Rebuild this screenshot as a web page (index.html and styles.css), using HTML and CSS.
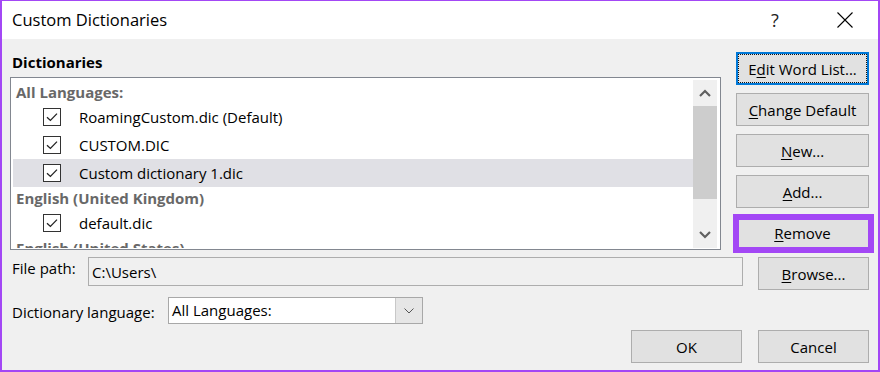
FILE: index.html
```html
<!DOCTYPE html>
<html lang="en">
<head>
<meta charset="utf-8">
<title>Custom Dictionaries</title>
<link rel="stylesheet" href="styles.css">
</head>
<body>
<div class="window">
  <div class="titlebar">
    <span class="title">Custom Dictionaries</span>
    <span class="help">?</span>
    <svg class="close" width="16" height="16" viewBox="0 0 16 16"><path d="M0.5 0.5 L15.5 15.5 M15.5 0.5 L0.5 15.5" stroke="#000" stroke-width="1.1" fill="none"/></svg>
  </div>
  <div class="content">
    <div class="top">
      <div class="dicts">
        <div class="section-label">Dictionaries</div>
        <div class="listbox">
          <div class="list">
            <div class="group">All Languages:</div>
            <div class="item"><span class="cb"><svg width="16" height="16" viewBox="0 0 16 16"><path d="M3 8.2 L6.4 11.4 L13 4.6" stroke="#222" stroke-width="1.3" fill="none"/></svg></span><span class="name">RoamingCustom.dic (Default)</span></div>
            <div class="item"><span class="cb"><svg width="16" height="16" viewBox="0 0 16 16"><path d="M3 8.2 L6.4 11.4 L13 4.6" stroke="#222" stroke-width="1.3" fill="none"/></svg></span><span class="name">CUSTOM.DIC</span></div>
            <div class="item selected"><span class="cb"><svg width="16" height="16" viewBox="0 0 16 16"><path d="M3 8.2 L6.4 11.4 L13 4.6" stroke="#222" stroke-width="1.3" fill="none"/></svg></span><span class="name">Custom dictionary 1.dic</span></div>
            <div class="group">English (United Kingdom)</div>
            <div class="item"><span class="cb"><svg width="16" height="16" viewBox="0 0 16 16"><path d="M3 8.2 L6.4 11.4 L13 4.6" stroke="#222" stroke-width="1.3" fill="none"/></svg></span><span class="name">default.dic</span></div>
            <div class="group">English (United States)</div>
          </div>
          <div class="scrollbar">
            <div class="arrow"><svg width="12" height="8" viewBox="0 0 12 8"><polyline points="1,7 6,2 11,7" stroke="#606060" stroke-width="2.2" fill="none"/></svg></div>
            <div class="track"><div class="thumb"></div></div>
            <div class="arrow"><svg width="12" height="8" viewBox="0 0 12 8"><polyline points="1,1 6,6 11,1" stroke="#606060" stroke-width="2.2" fill="none"/></svg></div>
          </div>
        </div>
      </div>
      <div class="actions">
        <div class="btn default">E<u>d</u>it Word List...</div>
        <div class="btn"><u>C</u>hange Default</div>
        <div class="btn"><u>N</u>ew...</div>
        <div class="btn"><u>A</u>dd...</div>
        <div class="btn marked"><u>R</u>emove</div>
      </div>
    </div>
    <div class="row path-row">
      <span class="label path-label">File path:</span>
      <div class="textbox">C:\Users\</div>
      <div class="btn wide"><u>B</u>rowse...</div>
    </div>
    <div class="row lang-row">
      <span class="label lang-label">Dictionary language:</span>
      <div class="select">
        <span class="select-value">All Languages:</span>
        <span class="drop"><svg width="10" height="6" viewBox="0 0 10 6"><polyline points="0.5,0.5 5,5 9.5,0.5" stroke="#555" stroke-width="1" fill="none"/></svg></span>
      </div>
    </div>
    <div class="row footer">
      <div class="btn wide">OK</div>
      <div class="btn wide">Cancel</div>
    </div>
  </div>
</div>
</body>
</html>
```

FILE: styles.css
```css
* { box-sizing: border-box; }
html, body { margin: 0; padding: 0; }
body {
  width: 880px;
  height: 372px;
  overflow: hidden;
  font-family: "Open Sans", "Noto Sans", sans-serif;
  font-size: 15px;
  color: #000;
}
.window {
  width: 880px;
  height: 372px;
  border: 2px solid #a347f5;
  border-top-width: 1px;
  background: #f0f0f0;
  display: flex;
  flex-direction: column;
}
.titlebar {
  height: 38px;
  flex: none;
  background: #fff;
  display: flex;
  align-items: center;
  padding-left: 10px;
}
.title {
  flex: 1;
  font-size: 16.5px;
  line-height: 20px;
}
.help {
  width: 20px;
  text-align: center;
  font-size: 18px;
  line-height: 20px;
  color: #222;
  margin-right: 52px;
}
.close {
  margin-right: 25px;
  flex: none;
}
.content {
  flex: 1;
  padding: 13px 9px 0 8px;
  display: flex;
  flex-direction: column;
}
.top {
  display: flex;
  gap: 15px;
  height: 198px;
  flex: none;
}
.dicts {
  width: 711px;
  display: flex;
  flex-direction: column;
}
.section-label {
  font-weight: 700;
  line-height: 20px;
  height: 20px;
  margin: 0 0 5px 2px;
}
.listbox {
  height: 173px;
  border: 1px solid #828790;
  background: #fff;
  display: flex;
  padding: 2px 2px 1px 2px;
}
.list {
  width: 680px;
  overflow: hidden;
  padding-top: 1px;
}
.group {
  height: 22px;
  line-height: 22px;
  padding-left: 3px;
  font-weight: 700;
  color: #686868;
  white-space: nowrap;
}
.item {
  height: 28px;
  display: flex;
  align-items: center;
  white-space: nowrap;
}
.item.selected { background: #e0e0e5; }
.cb {
  width: 18px;
  height: 18px;
  margin-left: 30px;
  margin-right: 18px;
  border: 1px solid #333;
  background: #fff;
  display: flex;
  align-items: center;
  justify-content: center;
}
.scrollbar {
  width: 24px;
  background: #f0f0f0;
  display: flex;
  flex-direction: column;
}
.arrow {
  height: 26px;
  display: flex;
  align-items: center;
  justify-content: center;
}
.track {
  flex: 1;
}
.thumb {
  height: 93px;
  background: #cdcdcd;
}
.actions {
  width: 133px;
  display: flex;
  flex-direction: column;
  gap: 8px;
}
.btn {
  height: 33px;
  flex: none;
  background: #e1e1e1;
  border: 1px solid #adadad;
  display: flex;
  align-items: center;
  justify-content: center;
  white-space: nowrap;
  position: relative;
}
.btn u { text-decoration-thickness: 1px; text-underline-offset: 2px; }
.btn.default {
  border: 2px solid #0078d7;
}
.btn.default::after {
  content: "";
  position: absolute;
  inset: 0;
  border: 1px dotted #111;
}
.btn.marked::after {
  content: "";
  position: absolute;
  top: -3px;
  left: -4px;
  right: -6px;
  bottom: -5px;
  border: 6px solid #a347f5;
}
.row {
  display: flex;
  flex: none;
}
.label {
  padding-left: 2px;
  white-space: nowrap;
}
.path-row {
  margin-top: 7px;
  height: 33px;
  align-items: flex-start;
}
.path-label {
  width: 78px;
  line-height: 22px;
}
.textbox {
  width: 655px;
  height: 29px;
  border: 1px solid #adadad;
  background: #f0f0f0;
  padding: 2px 0 0 3px;
  line-height: 24px;
  margin-right: 15px;
}
.btn.wide { width: 111px; }
.lang-row {
  margin-top: 7px;
  height: 27px;
  align-items: center;
}
.lang-label {
  width: 158px;
  padding-top: 3px;
}
.select {
  width: 255px;
  height: 27px;
  border: 1px solid #a8a8a8;
  background: #fff;
  display: flex;
  align-items: stretch;
}
.select-value {
  flex: 1;
  padding-left: 3px;
  line-height: 25px;
}
.drop {
  width: 27px;
  background: #e6e6e6;
  border-left: 1px solid #c8c8c8;
  display: flex;
  align-items: center;
  justify-content: center;
}
.footer {
  margin-top: 6px;
  justify-content: flex-end;
  gap: 16px;
}
```
